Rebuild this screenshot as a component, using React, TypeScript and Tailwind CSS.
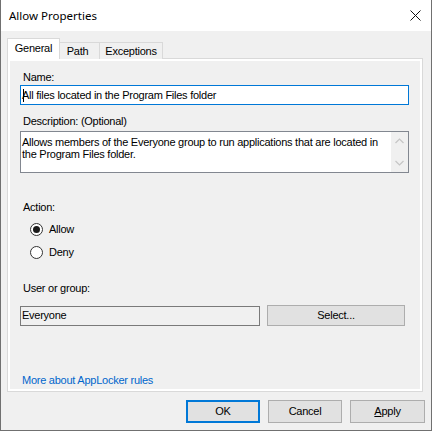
import React from "react";

const font = { fontFamily: '"Liberation Sans", Arial, sans-serif' };

function Radio({ checked, label }: { checked: boolean; label: string }) {
  return (
    <div className="flex items-center h-[16px] ml-[10px]">
      <div className="w-[13px] h-[13px] rounded-full border border-[#333333] bg-white flex items-center justify-center">
        {checked && <div className="w-[7px] h-[7px] rounded-full bg-[#1a1a1a]" />}
      </div>
      <span className="ml-[6px] leading-[13px]">{label}</span>
    </div>
  );
}

export default function App() {
  return (
    <div
      className="w-[432px] h-[431px] bg-[#f0f0f0] border-l border-r border-b border-[#707070] flex flex-col text-[11px] tracking-[-0.25px] text-black overflow-hidden"
      style={font}
    >
      {/* Title bar */}
      <div className="h-[31px] bg-white flex items-center justify-between pl-[8px] pr-[10px] shrink-0">
        <span
          className="text-[11.5px] tracking-normal text-black leading-none"
          style={{ fontFamily: '"Segoe UI", "Noto Sans", "Open Sans", sans-serif' }}
        >
          Allow Properties
        </span>
        <svg width="11" height="11" viewBox="0 0 11 11">
          <path d="M0.5 0.5 L10.5 10.5 M10.5 0.5 L0.5 10.5" stroke="#111" strokeWidth="1" />
        </svg>
      </div>

      {/* Tabs */}
      <div className="flex items-end h-[21px] mt-[7px] pl-[6px] shrink-0 relative z-10">
        <div className="h-[21px] w-[53px] bg-white border-l border-t border-r border-[#d9d9d9] flex items-center justify-center pb-[1px]">
          General
        </div>
        <div className="h-[17px] w-[40px] bg-[#f0f0f0] border-t border-r border-[#d9d9d9] flex items-center justify-center pr-[4px]">
          Path
        </div>
        <div className="h-[17px] w-[63px] bg-[#f0f0f0] border-t border-r border-[#d9d9d9] flex items-center justify-center">
          Exceptions
        </div>
      </div>

      {/* Panel */}
      <div className="ml-[6px] mr-[8px] -mt-px h-[334px] border border-[#d9d9d9] bg-white p-[2px] shrink-0">
        <div className="h-full bg-[#f0f0f0] flex flex-col pl-[10px] pr-[11px] pt-[10px]">
          <div className="ml-[3px] leading-[13px] h-[13px]">Name:</div>
          <div className="mt-[1px] h-[20px] border border-[#0078d7] bg-white flex items-center pl-[1px] relative">
            <span className="leading-[13px] whitespace-nowrap">All files located in the Program Files folder</span>
            <div className="absolute left-[2px] top-[3px] w-px h-[13px] bg-black" />
          </div>

          <div className="mt-[10px] ml-[3px] leading-[13px] h-[13px]">Description: (Optional)</div>
          <div className="mt-[3px] h-[42px] border border-[#828790] bg-white flex">
            <div className="flex-1 pl-[1px] pt-[4px] leading-[12px] whitespace-nowrap overflow-hidden">
              Allows members of the Everyone group to run applications that are located in
              <br />
              the Program Files folder.
            </div>
            <div className="w-[17px] bg-[#f0f0f0] flex flex-col justify-between items-center py-[6px]">
              <svg width="9" height="6" viewBox="0 0 9 6">
                <path d="M0.5 5 L4.5 1 L8.5 5" stroke="#c5c5c5" strokeWidth="1.2" fill="none" />
              </svg>
              <svg width="9" height="6" viewBox="0 0 9 6">
                <path d="M0.5 1 L4.5 5 L8.5 1" stroke="#c5c5c5" strokeWidth="1.2" fill="none" />
              </svg>
            </div>
          </div>

          <div className="mt-[28px] ml-[3px] leading-[13px] h-[13px]">Action:</div>
          <div className="mt-[7px]">
            <Radio checked label="Allow" />
          </div>
          <div className="mt-[7px]">
            <Radio checked={false} label="Deny" />
          </div>

          <div className="mt-[22px] ml-[3px] leading-[13px] h-[13px]">User or group:</div>
          <div className="mt-[10px] flex items-center">
            <div className="w-[240px] h-[20px] border border-[#7a7a7a] bg-[#f0f0f0] flex items-center pl-[1px]">
              Everyone
            </div>
            <div className="ml-[7px] w-[138px] h-[21px] border border-[#adadad] bg-[#e1e1e1] flex items-center justify-center">
              Select...
            </div>
          </div>

          <div className="mt-[48px] ml-[2px] leading-[13px] h-[13px] text-[#0066cc]">More about AppLocker rules</div>
        </div>
      </div>

      {/* Buttons */}
      <div className="flex justify-end gap-[8px] mt-[8px] pr-[6px]">
        <div className="w-[74px] h-[23px] border-2 border-[#0078d7] bg-[#e1e1e1] flex items-center justify-center">
          OK
        </div>
        <div className="w-[74px] h-[23px] border border-[#adadad] bg-[#e1e1e1] flex items-center justify-center">
          Cancel
        </div>
        <div className="w-[75px] h-[23px] border border-[#adadad] bg-[#e1e1e1] flex items-center justify-center">
          <span>
            <span className="underline">A</span>pply
          </span>
        </div>
      </div>
    </div>
  );
}
